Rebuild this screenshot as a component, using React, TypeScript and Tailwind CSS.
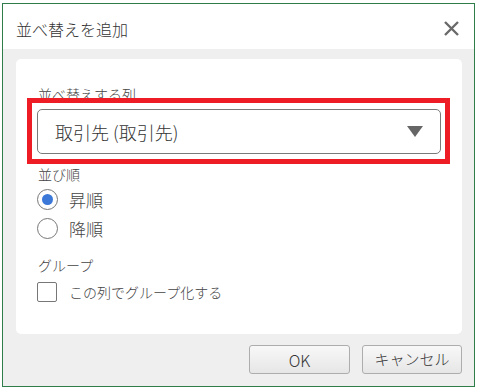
import React from "react";

const font = { fontFamily: '"Noto Sans CJK JP", "Noto Sans", sans-serif' };

export default function App() {
  return (
    <div className="w-[478px] h-[388px] bg-white pt-[3px] pl-[2px] font-light" style={font}>
      <div className="w-[473px] h-[384px] border border-[#2f7d4a] flex flex-col">
        <div className="h-[45px] bg-white flex items-center justify-between pl-[13px] pr-[15px]">
          <span className="text-[16px] leading-[20px] text-[#333] mt-[4px]">並べ替えを追加</span>
          <svg width="15" height="15" viewBox="0 0 15 15" className="mt-[4px]">
            <path d="M1 1 L14 14 M14 1 L1 14" stroke="#6a6a6a" strokeWidth="2.4" strokeLinecap="butt" />
          </svg>
        </div>
        <div className="flex-1 bg-[#efefef] pt-[10px] pl-[13px] pr-[12px] flex flex-col">
          <div className="relative h-[275px] bg-white rounded-[5px] pt-[25px] pl-[21px] pr-[21px] flex flex-col">
            <div className="text-[14px] leading-[20px] text-[#444] pl-[1px]">並べ替えする列</div>
            <div className="mt-[5px] h-[45px] w-[404px] border border-[#7a7a7a] rounded-[5px] flex items-center justify-between pl-[17px] pr-[17px]">
              <span className="text-[18px] leading-[22px] text-[#333]">取引先 (取引先)</span>
              <svg width="16" height="11" viewBox="0 0 16 11">
                <path d="M0 0 H16 L8 11 Z" fill="#666" />
              </svg>
            </div>
            <div className="mt-[10px] text-[14px] leading-[20px] text-[#444] pl-[1px]">並び順</div>
            <div className="mt-[1px] h-[29px] flex items-center">
              <div className="w-[21px] h-[21px] rounded-full border border-[#777] flex items-center justify-center">
                <div className="w-[11px] h-[11px] rounded-full bg-[#3b78d8]" />
              </div>
              <span className="ml-[11px] text-[17px] leading-[20px] text-[#444]">昇順</span>
            </div>
            <div className="h-[29px] flex items-center">
              <div className="w-[21px] h-[21px] rounded-full border border-[#777]" />
              <span className="ml-[11px] text-[17px] leading-[20px] text-[#444]">降順</span>
            </div>
            <div className="mt-[12px] text-[14px] leading-[20px] text-[#444] pl-[1px]">グループ</div>
            <div className="mt-[3px] h-[28px] flex items-center">
              <div className="w-[20px] h-[20px] rounded-[2px] border border-[#777]" />
              <span className="ml-[12px] text-[14px] leading-[20px] text-[#444]">この列でグループ化する</span>
            </div>
            <div className="absolute left-[11px] top-[39px] w-[423px] h-[66px] border-[5px] border-[#ee1c25]" />
          </div>
          <div className="mt-[11px] flex justify-end gap-[12px]">
            <button className="w-[101px] h-[29px] rounded-[3px] border border-[#adadad] bg-gradient-to-b from-[#f8f8f8] to-[#e6e6e6] text-[16px] text-[#333] flex items-center justify-center">
              OK
            </button>
            <button className="w-[100px] h-[29px] rounded-[3px] border border-[#adadad] bg-gradient-to-b from-[#f8f8f8] to-[#e6e6e6] text-[15px] text-[#333] flex items-center justify-center">
              キャンセル
            </button>
          </div>
        </div>
      </div>
    </div>
  );
}
